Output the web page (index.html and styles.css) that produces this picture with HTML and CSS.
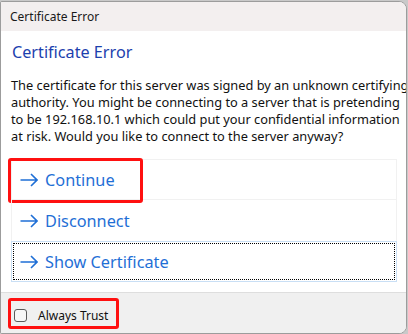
FILE: index.html
```html
<!DOCTYPE html>
<html>
<head>
<meta charset="utf-8">
<link rel="stylesheet" href="styles.css">
</head>
<body>
<div class="window">
  <div class="titlebar">Certificate Error</div>
  <div class="content">
    <h1 class="heading">Certificate Error</h1>
    <p class="message">The certificate for this server was signed by an unknown certifying<br>authority. You might be connecting to a server that is pretending<br>to be 192.168.10.1 which could put your confidential information<br>at risk. Would you like to connect to the server anyway?</p>
    <div class="links">
      <div class="link link-continue">
        <svg class="arrow" width="18" height="14" viewBox="0 0 18 14"><path d="M0.5 7H17M11 1L17 7L11 13" fill="none" stroke="#1f6fd6" stroke-width="1.6"/></svg>
        <span>Continue</span>
        <div class="mark mark-continue"></div>
      </div>
      <div class="link link-disconnect">
        <svg class="arrow" width="18" height="14" viewBox="0 0 18 14"><path d="M0.5 7H17M11 1L17 7L11 13" fill="none" stroke="#1f6fd6" stroke-width="1.6"/></svg>
        <span>Disconnect</span>
      </div>
      <div class="link link-show">
        <div class="focus">
          <svg class="arrow" width="18" height="14" viewBox="0 0 18 14"><path d="M0.5 7H17M11 1L17 7L11 13" fill="none" stroke="#1f6fd6" stroke-width="1.6"/></svg>
          <span>Show Certificate</span>
        </div>
      </div>
    </div>
  </div>
  <div class="footer">
    <label class="trust">
      <span class="checkbox"></span>
      <span class="trust-label">Always Trust</span>
    </label>
    <div class="mark mark-trust"></div>
  </div>
</div>
</body>
</html>
```

FILE: styles.css
```css
html, body {
  margin: 0;
  padding: 0;
}
body {
  background: #c9c9c9;
  width: 408px;
  height: 334px;
  overflow: hidden;
  font-family: "Noto Sans", "Open Sans", sans-serif;
}
.window {
  box-sizing: border-box;
  margin: 1px 1px 0 0;
  height: 333px;
  background: #ffffff;
  border: 1px solid #9c9c9c;
  border-radius: 2px 8px 8px 2px;
  overflow: hidden;
  display: flex;
  flex-direction: column;
}
.titlebar {
  height: 29px;
  line-height: 29px;
  background: #f3efef;
  padding-left: 9px;
  font-size: 12px;
  color: #1a1a1a;
}
.content {
  padding: 0 9px 0 10px;
  flex: 1;
}
.heading {
  margin: 9px 0 0 1px;
  font-size: 16.2px;
  font-weight: normal;
  line-height: 24px;
  color: #1c3fae;
}
.message {
  margin: 13px 0 0 0;
  font-size: 12.8px;
  letter-spacing: 0;
  white-space: nowrap;
  line-height: 17px;
  color: #111;
}
.links {
  margin-top: 14px;
  display: flex;
  flex-direction: column;
}
.link {
  position: relative;
  box-sizing: border-box;
  height: 41px;
  display: flex;
  align-items: center;
  gap: 7px;
  padding-left: 8px;
  font-size: 16.3px;
  color: #1f6fd6;
  border: 1px solid #f1f1f1;
}
.link-disconnect {
  border-top: none;
  border-bottom: none;
}
.link-show {
  border: 1px solid #c9dff5;
  padding: 1px;
}
.focus {
  box-sizing: border-box;
  flex: 1;
  height: 100%;
  display: flex;
  align-items: center;
  gap: 7px;
  padding-left: 6px;
  border: 1px dotted #000;
}
.arrow {
  display: block;
  flex: none;
}
.mark {
  position: absolute;
  box-sizing: border-box;
  border: 3px solid #ff1010;
  border-radius: 3px;
}
.mark-continue {
  left: -4px;
  top: -2px;
  width: 135px;
  height: 45px;
}
.footer {
  position: relative;
  height: 40px;
  background: #f0f0f0;
  border-top: 1px solid #dedede;
}
.trust {
  display: flex;
  align-items: center;
  gap: 11px;
  padding: 14px 0 0 13px;
}
.checkbox {
  box-sizing: border-box;
  width: 13px;
  height: 13px;
  border: 1px solid #5a5a5a;
  border-radius: 3px;
  background: #f7f7f7;
}
.trust-label {
  font-size: 12px;
  color: #111;
}
.mark-trust {
  left: 7px;
  top: 5px;
  width: 111px;
  height: 31px;
}
```
